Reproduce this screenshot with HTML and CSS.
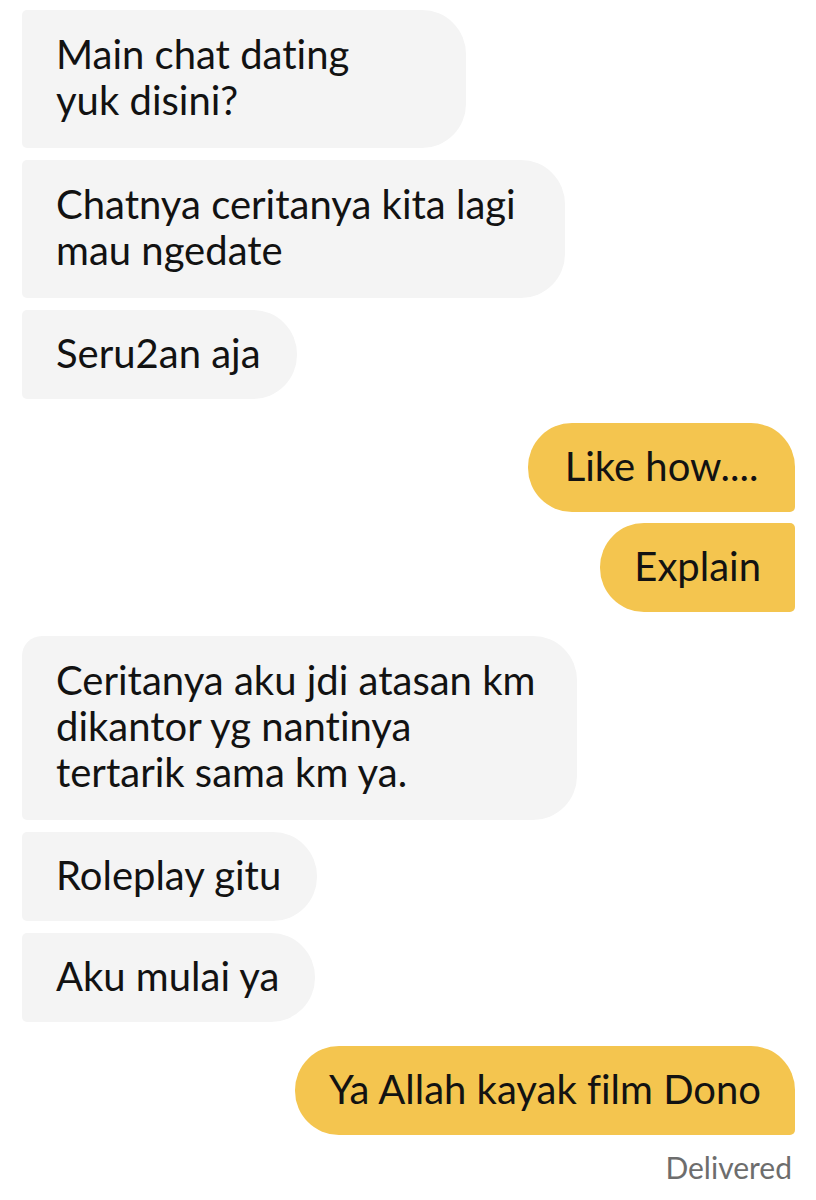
FILE: index.html
```html
<!DOCTYPE html>
<html lang="id">
<head>
<meta charset="utf-8">
<title>Chat</title>
<link rel="stylesheet" href="styles.css">
</head>
<body>
<main class="chat">
  <section class="group them">
    <div class="bubble multi w-444">Main chat dating<br>yuk disini?</div>
    <div class="bubble multi w-543">Chatnya ceritanya kita lagi<br>mau ngedate</div>
    <div class="bubble">Seru2an aja</div>
  </section>
  <section class="group me tight">
    <div class="bubble w-267">Like how....</div>
    <div class="bubble flat-top">Explain</div>
  </section>
  <section class="group them">
    <div class="bubble multi round-top w-555">Ceritanya aku jdi atasan km<br>dikantor yg nantinya<br>tertarik sama km ya.</div>
    <div class="bubble">Roleplay gitu</div>
    <div class="bubble">Aku mulai ya</div>
  </section>
  <section class="group me">
    <div class="bubble">Ya Allah kayak film Dono</div>
    <div class="status">Delivered</div>
  </section>
</main>
</body>
</html>
```
FILE: styles.css
```css
* {
  box-sizing: border-box;
}

html, body {
  margin: 0;
  background: #ffffff;
}

body {
  font-family: "Lato", "Liberation Sans", sans-serif;
  color: #121212;
  font-variant-ligatures: none;
}

.chat {
  display: flex;
  flex-direction: column;
  gap: 24px;
  padding: 10px 21px 0 22px;
}

.group {
  display: flex;
  flex-direction: column;
  gap: 12px;
}

.group.tight {
  gap: 11px;
}

.group.them {
  align-items: flex-start;
}

.group.me {
  align-items: flex-end;
}

.bubble {
  font-size: 40px;
  line-height: 46px;
  white-space: nowrap;
  padding: 20px 36px 23px 34px;
}

.bubble.multi {
  padding-top: 21px;
  padding-bottom: 25px;
}

.them .bubble {
  background: #f4f4f4;
  border-radius: 5px 44px 44px 5px;
}

.them .bubble.round-top {
  border-top-left-radius: 20px;
}

.w-444 { width: 444px; }
.w-543 { width: 543px; }
.w-555 { width: 555px; }
.w-267 { width: 267px; }

.me .bubble {
  background: #f4c54f;
  padding-left: 34px;
  padding-right: 34px;
  border-radius: 44px 44px 5px 44px;
}

.me .bubble.w-267 {
  text-align: center;
}

.me .bubble.flat-top {
  border-top-right-radius: 5px;
}

.status {
  margin-top: 3px;
  margin-right: 3px;
  font-size: 30px;
  line-height: 34px;
  color: #6d6d6d;
}
```
